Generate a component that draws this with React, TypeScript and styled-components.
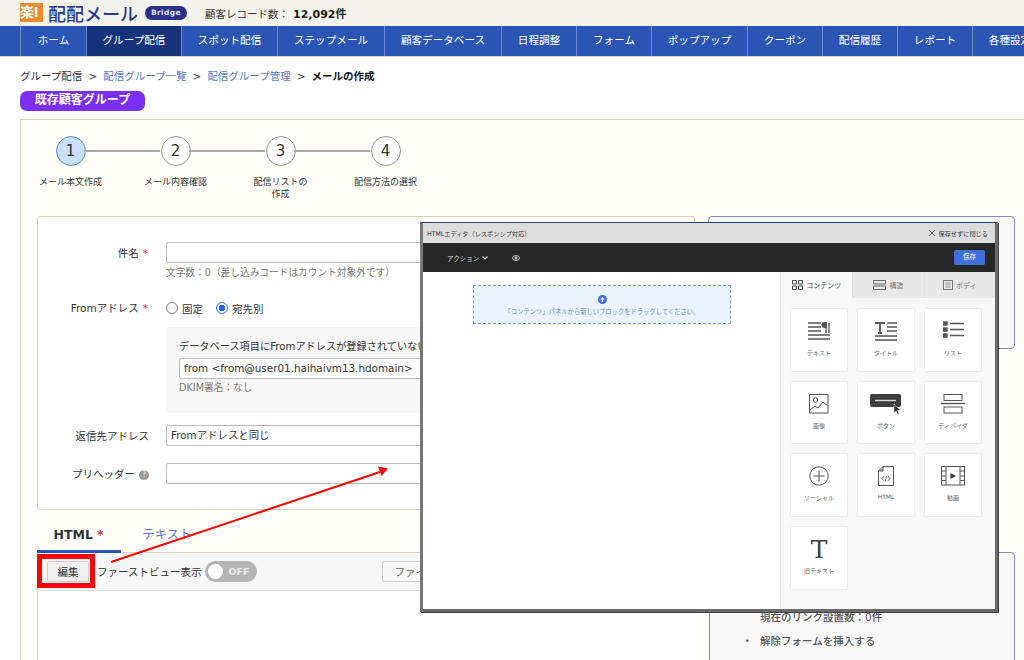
import React from 'react';
import styled, { createGlobalStyle } from 'styled-components';

const GlobalStyle = createGlobalStyle`
  html, body {
    margin: 0;
    padding: 0;
    width: 1024px;
    height: 660px;
    overflow: hidden;
    background: #fff;
    font-family: "DejaVu Sans", "Noto Sans CJK JP", sans-serif;
    color: #333;
  }
  * { box-sizing: border-box; }
`;

const Page = styled.div`
  position: relative;
  width: 1024px;
  height: 660px;
  overflow: hidden;
`;

const Header = styled.header`
  height: 26px;
  background: #f3f2ed;
  padding-left: 20px;
  display: flex;
  align-items: center;
`;

const LogoMark = styled.span`
  width: 23px;
  height: 19px;
  margin-top: -1px;
  background: #ef8b2c;
  color: #fff;
  font-size: 14px;
  font-weight: 700;
  line-height: 19px;
  letter-spacing: -1px;
  white-space: nowrap;
`;

const LogoText = styled.span`
  margin-left: 5px;
  font-size: 18px;
  line-height: 20px;
  font-weight: 500;
  color: #2b3a8c;
  font-family: "Noto Sans CJK JP", sans-serif;
  white-space: nowrap;
`;

const BridgeBadge = styled.span`
  margin-left: 7px;
  width: 42px;
  height: 14px;
  border-radius: 7px;
  background: #2b3088;
  color: #dfe2f5;
  font-size: 7.5px;
  font-weight: 700;
  letter-spacing: 0.4px;
  line-height: 14px;
  text-align: center;
`;

const RecordCount = styled.span`
  margin-left: 18px;
  font-size: 10.5px;
  white-space: nowrap;
  color: #333;
  b { margin-left: 4px; font-weight: 700; color: #222; font-size: 11px; }
`;

const Nav = styled.nav`
  height: 31px;
  background: #2a55b5;
  border-bottom: 1px solid #d9d7c9;
  padding-left: 20px;
  display: flex;
  overflow: hidden;
`;

const NavItem = styled.div<{ $w: number; $active?: boolean }>`
  flex: 0 0 ${(p) => p.$w}px;
  height: 30px;
  line-height: 29px;
  border-left: 1px solid #6f8bc9;
  background: ${(p) => (p.$active ? '#14337a' : 'transparent')};
  color: #fff;
  font-size: 10.6px;
  text-align: center;
  white-space: nowrap;
`;

const Breadcrumb = styled.div`
  margin: 11px 0 0 20px;
  height: 16px;
  line-height: 16px;
  font-size: 10.5px;
  color: #333;
  white-space: nowrap;
  display: flex;
  gap: 6px;
`;

const Crumb = styled.span<{ $link?: boolean; $current?: boolean }>`
  color: ${(p) => (p.$link ? '#5a77c0' : p.$current ? '#111' : '#333')};
  font-weight: ${(p) => (p.$current ? 700 : 400)};
`;

const GroupPill = styled.div`
  margin: 7px 0 0 20px;
  width: 125px;
  height: 20px;
  border-radius: 7px;
  background: #7a2ff2;
  color: #fff;
  font-size: 12px;
  font-weight: 700;
  line-height: 19px;
  text-align: center;
`;

const MainCard = styled.section`
  margin: 8px 0 0 20px;
  height: 560px;
  padding: 0 0 0 16px;
  background: #fffdf8;
  border: 1px solid #d8d2b8;
  border-right: none;
`;

const Steps = styled.ol`
  list-style: none;
  margin: 0 0 0 -19px;
  padding: 16px 0 0 0;
  height: 96px;
  display: flex;
`;

const Step = styled.li`
  position: relative;
  width: 105px;
  display: flex;
  flex-direction: column;
  align-items: center;
  &:not(:last-child)::after {
    content: '';
    position: absolute;
    top: 14px;
    left: 66px;
    width: 76px;
    height: 2px;
    background: #aaa;
  }
`;

const StepCircle = styled.span<{ $active?: boolean }>`
  width: 30px;
  height: 30px;
  border-radius: 50%;
  border: 1px solid ${(p) => (p.$active ? '#5b8fd6' : '#999')};
  background: ${(p) => (p.$active ? '#c9dff7' : '#fff')};
  font-size: 15px;
  line-height: 28px;
  text-align: center;
  color: #333;
`;

const StepLabel = styled.span`
  margin-top: 10px;
  width: 90px;
  font-size: 9px;
  line-height: 12px;
  text-align: center;
  color: #333;
`;

const Columns = styled.div`
  display: flex;
  gap: 13px;
`;

const FormColumn = styled.div`
  width: 658px;
  flex: none;
`;

const FormCard = styled.div`
  height: 294px;
  background: #fff;
  border: 1px solid #d8d2b8;
  border-radius: 3px;
  padding-top: 25px;
`;

const FieldRow = styled.div<{ $mt?: number }>`
  display: flex;
  margin-top: ${(p) => p.$mt ?? 0}px;
`;

const FieldLabel = styled.label`
  width: 120px;
  flex: none;
  padding: 3px 9px 0 0;
  text-align: right;
  font-size: 10.5px;
  line-height: 16px;
  color: #333;
  white-space: nowrap;
`;

const Required = styled.span`
  margin: 0 1px 0 4px;
  color: #d33;
`;

const FieldBody = styled.div`
  margin-left: 8px;
  flex: 1;
  min-width: 0;
`;

const TextInput = styled.div`
  width: 100%;
  height: 21px;
  padding-left: 4px;
  background: #fff;
  border: 1px solid #bbb;
  border-radius: 2px;
  font-size: 10.4px;
  line-height: 19px;
  color: #333;
  white-space: nowrap;
  overflow: hidden;
`;

const Hint = styled.div<{ $mt?: number }>`
  margin-top: ${(p) => p.$mt ?? 3}px;
  font-size: 9.7px;
  line-height: 14px;
  color: #777;
  white-space: nowrap;
`;

const RadioGroup = styled.div`
  height: 22px;
  display: flex;
  align-items: center;
  font-size: 10.5px;
  color: #333;
`;

const Radio = styled.span<{ $on?: boolean }>`
  width: 12px;
  height: 12px;
  margin-right: 4px;
  border-radius: 50%;
  border: ${(p) => (p.$on ? '1px solid #2f6fe0' : '1px solid #777')};
  background: ${(p) => (p.$on ? 'radial-gradient(circle, #1f66e5 0 3px, #fff 3.5px)' : '#fff')};
`;

const RadioText = styled.span`
  margin-right: 13px;
`;

const FallbackBox = styled.div`
  margin-top: 8px;
  height: 86px;
  padding: 12px 13px;
  background: #f7f7f7;
  white-space: nowrap;
  overflow: hidden;
`;

const FallbackTitle = styled.div`
  font-size: 10.2px;
  line-height: 16px;
  margin-bottom: 3px;
`;

const HelpMark = styled.span`
  display: inline-block;
  width: 10px;
  height: 10px;
  margin-left: 4px;
  border-radius: 50%;
  background: #999;
  color: #fff;
  font-size: 8px;
  line-height: 10px;
  text-align: center;
  vertical-align: 1px;
`;

const Tabs = styled.div`
  margin-top: 15px;
  height: 28px;
  display: flex;
  gap: 4px;
  border-bottom: 1px solid #dcd7c4;
`;

const Tab = styled.div<{ $active?: boolean }>`
  width: 84px;
  height: 28px;
  text-align: center;
  font-size: 12.5px;
  line-height: 20px;
  font-weight: ${(p) => (p.$active ? 700 : 400)};
  color: ${(p) => (p.$active ? '#333' : '#5a77c8')};
  border-bottom: ${(p) => (p.$active ? '3px solid #2a55b5' : 'none')};
  white-space: nowrap;
`;

const EditorToolbar = styled.div`
  height: 38px;
  padding-left: 9px;
  background: #f7f7f7;
  border-bottom: 1px solid #ddd;
  border-left: 1px solid #d8d2b8;
  display: flex;
  align-items: center;
  font-size: 10.5px;
  color: #333;
`;

const ToolButton = styled.button`
  width: 42px;
  height: 21px;
  padding: 0;
  background: #f1f1f1;
  border: 1px solid #ccc;
  border-radius: 2px;
  font: inherit;
  color: #333;
`;

const ToolText = styled.span`
  margin-left: 8px;
`;

const FileButton = styled(ToolButton)`
  width: 80px;
  margin-left: 125px;
  text-align: left;
  padding-left: 11px;
  color: #666;
  background: #f7f7f7;
`;

const Toggle = styled.span`
  position: relative;
  margin-left: 4px;
  width: 52px;
  height: 21px;
  border-radius: 11px;
  background: #b5b5b5;
  color: #e9e9e9;
  font-size: 9.5px;
  font-weight: 700;
  line-height: 21px;
  padding-left: 23px;
  &::before {
    content: '';
    position: absolute;
    left: 3px;
    top: 3px;
    width: 15px;
    height: 15px;
    border-radius: 50%;
    background: #fff;
  }
`;

const EditorBody = styled.div`
  height: 70px;
  background: #fff;
  border-left: 1px solid #d8d2b8;
`;

const SideColumn = styled.aside`
  width: 307px;
  flex: none;
`;

const SidePanel = styled.div<{ $h: number; $mt?: number; $ml?: number }>`
  height: ${(p) => p.$h}px;
  margin-top: ${(p) => p.$mt ?? 0}px;
  margin-left: ${(p) => p.$ml ?? 0}px;
  background: #f8f8f8;
  border: 1px solid #8088c8;
  border-radius: 4px;
  overflow: hidden;
`;

const SideList = styled.ul`
  margin: 55px 0 0 0;
  padding: 0 0 0 50px;
  list-style: none;
  font-size: 10.5px;
  line-height: 18px;
  color: #555;
  font-weight: 500;
`;

const SideItem = styled.li<{ $dot?: boolean }>`
  margin-top: ${(p) => (p.$dot ? 6 : 0)}px;
  position: relative;
  white-space: nowrap;
  &::before {
    content: '${(p) => (p.$dot ? '・' : '')}';
    position: absolute;
    left: -18px;
  }
`;

/* overlay: screenshot of the editor window pasted over the page */
const EditorWindow = styled.div`
  position: absolute;
  left: 420px;
  top: 222px;
  width: 578px;
  height: 390px;
  display: flex;
  flex-direction: column;
  background: #fff;
  border: 3px solid #6a6a6a;
  border-top: 1px solid #28406e;
  border-left-color: #777;
  box-shadow: 1px 1px 0 #444;
`;

const WindowTitle = styled.div`
  height: 20px;
  padding: 0 7px 0 4px;
  background: #dcdcdc;
  display: flex;
  align-items: center;
  justify-content: space-between;
  font-size: 6.2px;
  color: #333;
  white-space: nowrap;
`;

const CloseLink = styled.span`
  display: flex;
  align-items: center;
  gap: 3px;
`;

const ActionBar = styled.div`
  height: 29px;
  flex: none;
  padding: 0 10px 0 24px;
  background: #262626;
  color: #ddd;
  font-size: 6.5px;
  display: flex;
  align-items: center;
`;

const ActionMenu = styled.span`
  display: flex;
  align-items: center;
  gap: 3px;
`;

const EyeIcon = styled.span`
  margin-left: 24px;
  display: flex;
`;

const SaveButton = styled.span`
  margin-left: auto;
  width: 31px;
  height: 15px;
  border-radius: 2px;
  background: #3f6fd8;
  color: #fff;
  line-height: 15px;
  text-align: center;
`;

const EditorPane = styled.div`
  flex: 1;
  min-height: 0;
  display: flex;
`;

const Canvas = styled.div`
  flex: 1;
  padding: 13px 49px 0 50px;
  background: #fff;
`;

const DropZone = styled.div`
  height: 39px;
  background: #e8f3fe;
  border: 1px dashed #7a9be0;
  display: flex;
  flex-direction: column;
  align-items: center;
  padding-top: 9px;
  gap: 3px;
  font-size: 6.3px;
  color: #6c8bd0;
  white-space: nowrap;
`;

const BlockPanel = styled.div`
  width: 215px;
  flex: none;
  background: #f8f8f8;
  border-left: 1px solid #eee;
`;

const PanelTabs = styled.div`
  height: 26px;
  display: flex;
`;

const PanelTab = styled.div<{ $active?: boolean }>`
  width: 71.67px;
  background: ${(p) => (p.$active ? '#f8f8f8' : '#e8e8e8')};
  color: ${(p) => (p.$active ? '#444' : '#777')};
  border-left: ${(p) => (p.$active ? 'none' : '1px solid #e0e0e0')};
  font-size: 7px;
  display: flex;
  align-items: center;
  justify-content: center;
  gap: 3px;
  white-space: nowrap;
`;

const BlockGrid = styled.div`
  padding: 10px 12px 0 9px;
  display: grid;
  grid-template-columns: repeat(3, 58px);
  grid-auto-rows: 63.7px;
  column-gap: 9px;
  row-gap: 9px;
`;

const BlockTile = styled.div`
  background: #fff;
  border: 1px solid #eee;
  border-radius: 2px;
  display: flex;
  flex-direction: column;
  align-items: center;
  padding-top: 12px;
  font-size: 6px;
  color: #666;
  white-space: nowrap;
`;

const BlockIcon = styled.span`
  height: 21px;
  display: flex;
  align-items: flex-start;
  justify-content: center;
`;

const BlockLabel = styled.span`
  margin-top: 6px;
`;

const SerifT = styled.span`
  font-family: "DejaVu Serif", "Liberation Serif", serif;
  font-size: 25px;
  line-height: 21px;
  color: #444;
`;

const EditHighlight = styled.div`
  position: absolute;
  left: 37px;
  top: 554px;
  width: 58px;
  height: 34px;
  border: 5px solid #f00;
`;

const Annotation = styled.svg`
  position: absolute;
  left: 0;
  top: 0;
`;

const g = '#555';

const icons: Record<string, React.ReactNode> = {
  text: (
    <svg width="24" height="21" viewBox="0 0 24 21" fill="none" stroke={g}>
      <path d="M1 2h13M1 6h13M1 10h13M1 14h22M1 18h22" strokeWidth="1.3" />
      <path d="M19 2v10M22 2v10" strokeWidth="1.3" />
      <path d="M22 1h-4.500a3 3 0 0 0 0 6H20V1z" fill={g} stroke="none" />
    </svg>
  ),
  title: (
    <svg width="24" height="21" viewBox="0 0 24 21" fill="none" stroke={g} strokeWidth="1.3">
      <path d="M1 2h10M6 2v10M4 12h4" strokeWidth="1.8" />
      <path d="M13 2h10M13 6h10M13 10h10M1 15h22M1 19h22" />
    </svg>
  ),
  list: (
    <svg width="21" height="17" viewBox="0 0 21 17" fill="none" stroke={g} strokeWidth="1.4">
      <path d="M0 1h4v3H0zM0 7h4v3H0zM0 13h4v3H0z" fill={g} />
      <path d="M7 2.500h14M7 8.500h14M7 14.500h14" />
    </svg>
  ),
  image: (
    <svg width="20" height="20" viewBox="0 0 20 20" fill="none" stroke={g}>
      <rect x=".5" y=".5" width="18.5" height="18.5" strokeWidth="1" />
      <circle cx="6.5" cy="6" r="2.2" />
      <path d="M1 16l5-4 3 2 5-6 5 4" />
    </svg>
  ),
  button: (
    <svg width="33" height="21" viewBox="0 0 33 21" fill="none">
      <rect x="0" y="0" width="31" height="13" rx="2" fill="#3e3e3e" />
      <path d="M5 6.500h21" stroke="#ddd" strokeWidth="1.4" />
      <path d="M24 10l0 9 2.200-2 1.500 3.500 1.500-.7-1.500-3.300 3-.2z" fill="#333" stroke="#fff" strokeWidth=".5" />
    </svg>
  ),
  divider: (
    <svg width="24" height="20" viewBox="0 0 24 20" fill="none" stroke={g}>
      <rect x="3" y=".5" width="18" height="6" />
      <path d="M0 9.500h24" strokeWidth="1.4" />
      <rect x="3" y="13" width="18" height="6" />
    </svg>
  ),
  social: (
    <svg width="20" height="20" viewBox="0 0 20 20" fill="none" stroke={g}>
      <circle cx="10" cy="10" r="9.2" />
      <path d="M10 4.500v11M4.500 10h11" />
    </svg>
  ),
  html: (
    <svg width="16" height="20" viewBox="0 0 16 20" fill="none" stroke={g}>
      <path d="M5 .5h10.500v19H.5V5z" />
      <path d="M5 .5V5H.5" fill="#aaa" />
      <path d="M6 10l-2 2.500L6 15M10 10l2 2.500-2 2.500M8.800 9.500l-1.600 6" strokeWidth=".8" />
    </svg>
  ),
  video: (
    <svg width="24" height="20" viewBox="0 0 24 20" fill="none" stroke={g}>
      <rect x=".5" y=".5" width="23" height="18.5" />
      <path d="M5 .5v18.500M19 .5v18.500M.5 5h4.500M.5 10h4.500M.5 14.500h4.500M19 5h4.500M19 10h4.500M19 14.500h4.500" />
      <path d="M9.500 7l5.500 3-5.500 3z" fill="#333" stroke="none" />
    </svg>
  ),
};

const navItems = [
  { label: 'ホーム', w: 66 },
  { label: 'グループ配信', w: 95, active: true },
  { label: 'スポット配信', w: 96 },
  { label: 'ステップメール', w: 107 },
  { label: '顧客データベース', w: 117 },
  { label: '日程調整', w: 75 },
  { label: 'フォーム', w: 75 },
  { label: 'ポップアップ', w: 96 },
  { label: 'クーポン', w: 75 },
  { label: '配信履歴', w: 75 },
  { label: 'レポート', w: 75 },
  { label: '各種設定', w: 75 },
];

const steps = [
  { n: 1, label: 'メール本文作成', active: true },
  { n: 2, label: 'メール内容確認' },
  { n: 3, label: '配信リストの\n作成' },
  { n: 4, label: '配信方法の選択' },
];

const blocks = [
  { key: 'text', label: 'テキスト' },
  { key: 'title', label: 'タイトル' },
  { key: 'list', label: 'リスト' },
  { key: 'image', label: '画像' },
  { key: 'button', label: 'ボタン' },
  { key: 'divider', label: 'ディバイダ' },
  { key: 'social', label: 'ソーシャル' },
  { key: 'html', label: 'HTML' },
  { key: 'video', label: '動画' },
];

const App = () => {
  return (
    <Page>
      <GlobalStyle />
      <Header>
        <LogoMark>楽!</LogoMark>
        <LogoText>配配メール</LogoText>
        <BridgeBadge>Bridge</BridgeBadge>
        <RecordCount>
          顧客レコード数：<b>12,092件</b>
        </RecordCount>
      </Header>
      <Nav>
        {navItems.map((item) => (
          <NavItem key={item.label} $w={item.w} $active={item.active}>
            {item.label}
          </NavItem>
        ))}
      </Nav>
      <Breadcrumb>
        <Crumb>グループ配信</Crumb>
        <span>&gt;</span>
        <Crumb $link>配信グループ一覧</Crumb>
        <span>&gt;</span>
        <Crumb $link>配信グループ管理</Crumb>
        <span>&gt;</span>
        <Crumb $current>メールの作成</Crumb>
      </Breadcrumb>
      <GroupPill>既存顧客グループ</GroupPill>
      <MainCard>
        <Steps>
          {steps.map((s) => (
            <Step key={s.n}>
              <StepCircle $active={s.active}>{s.n}</StepCircle>
              <StepLabel>
                {s.label.split('\n').map((line) => (
                  <div key={line}>{line}</div>
                ))}
              </StepLabel>
            </Step>
          ))}
        </Steps>
        <Columns>
          <FormColumn>
            <FormCard>
              <FieldRow>
                <FieldLabel>
                  件名<Required>*</Required>
                </FieldLabel>
                <FieldBody>
                  <TextInput />
                  <Hint>文字数：0（差し込みコードはカウント対象外です）</Hint>
                </FieldBody>
              </FieldRow>
              <FieldRow $mt={17}>
                <FieldLabel>
                  Fromアドレス<Required>*</Required>
                </FieldLabel>
                <FieldBody>
                  <RadioGroup>
                    <Radio />
                    <RadioText>固定</RadioText>
                    <Radio $on />
                    <RadioText>宛先別</RadioText>
                  </RadioGroup>
                  <FallbackBox>
                    <FallbackTitle>データベース項目にFromアドレスが登録されていない場合</FallbackTitle>
                    <TextInput>from &lt;from@user01.haihaivm13.hdomain&gt;</TextInput>
                    <Hint $mt={2}>DKIM署名：なし</Hint>
                  </FallbackBox>
                </FieldBody>
              </FieldRow>
              <FieldRow $mt={12}>
                <FieldLabel>返信先アドレス</FieldLabel>
                <FieldBody>
                  <TextInput>Fromアドレスと同じ</TextInput>
                </FieldBody>
              </FieldRow>
              <FieldRow $mt={17}>
                <FieldLabel>
                  プリヘッダー<HelpMark>?</HelpMark>
                </FieldLabel>
                <FieldBody>
                  <TextInput />
                </FieldBody>
              </FieldRow>
            </FormCard>
            <Tabs>
              <Tab $active>
                HTML<Required>*</Required>
              </Tab>
              <Tab>テキスト</Tab>
            </Tabs>
            <EditorToolbar>
              <ToolButton>編集</ToolButton>
              <ToolText>ファーストビュー表示</ToolText>
              <Toggle>OFF</Toggle>
              <FileButton>ファイルから</FileButton>
            </EditorToolbar>
            <EditorBody />
          </FormColumn>
          <SideColumn>
            <SidePanel $h={133} />
            <SidePanel $h={140} $mt={203} $ml={1}>
              <SideList>
                <SideItem>現在のリンク設置数：0件</SideItem>
                <SideItem $dot>解除フォームを挿入する</SideItem>
              </SideList>
            </SidePanel>
          </SideColumn>
        </Columns>
      </MainCard>

      <EditorWindow>
        <WindowTitle>
          <span>HTMLエディタ（レスポンシブ対応）</span>
          <CloseLink>
            <svg width="8" height="8" viewBox="0 0 8 8" stroke="#444" strokeWidth="0.9">
              <path d="M1 1l6 6M7 1L1 7" />
            </svg>
            保存せずに閉じる
          </CloseLink>
        </WindowTitle>
        <ActionBar>
          <ActionMenu>
            アクション
            <svg width="6" height="4" viewBox="0 0 6 4" fill="none" stroke="#ddd" strokeWidth="1.1">
              <path d="M.5.5L3 3 5.500.5" />
            </svg>
          </ActionMenu>
          <EyeIcon>
            <svg width="8" height="6" viewBox="0 0 8 6" fill="none" stroke="#ddd" strokeWidth=".9">
              <ellipse cx="4" cy="3" rx="3.500" ry="2.400" />
              <circle cx="4" cy="3" r="1" fill="#ddd" />
            </svg>
          </EyeIcon>
          <SaveButton>保存</SaveButton>
        </ActionBar>
        <EditorPane>
          <Canvas>
            <DropZone>
              <svg width="9" height="9" viewBox="0 0 9 9">
                <circle cx="4.500" cy="4.500" r="4.500" fill="#3f6fd8" />
                <path d="M4.500 2L6.500 4.500H5.200V7H3.800V4.500H2.500z" fill="#fff" />
              </svg>
              「コンテンツ」パネルから新しいブロックをドラッグしてください。
            </DropZone>
          </Canvas>
          <BlockPanel>
            <PanelTabs>
              <PanelTab $active>
                <svg width="11" height="10" viewBox="0 0 11 10" fill="none" stroke="#444">
                  <path d="M.5.500h4v3.500h-4zM6.500.500h4v3.500h-4zM.5 6h4v3.500h-4zM6.500 6h4v3.500h-4z" />
                </svg>
                コンテンツ
              </PanelTab>
              <PanelTab>
                <svg width="13" height="10" viewBox="0 0 13 10" fill="none" stroke="#666">
                  <path d="M.5.500h12v3.500H.5zM.5 6h12v3.500H.5z" />
                </svg>
                構造
              </PanelTab>
              <PanelTab>
                <svg width="10" height="10" viewBox="0 0 10 10" fill="none" stroke="#777">
                  <rect x=".5" y=".5" width="9" height="9" />
                  <path d="M2.500 3h5M2.500 5h5M2.500 7h5" strokeWidth=".7" />
                </svg>
                ボディ
              </PanelTab>
            </PanelTabs>
            <BlockGrid>
              {blocks.map((b) => (
                <BlockTile key={b.key}>
                  <BlockIcon>{icons[b.key]}</BlockIcon>
                  <BlockLabel>{b.label}</BlockLabel>
                </BlockTile>
              ))}
              <BlockTile>
                <BlockIcon>
                  <SerifT>T</SerifT>
                </BlockIcon>
                <BlockLabel>旧テキスト</BlockLabel>
              </BlockTile>
            </BlockGrid>
          </BlockPanel>
        </EditorPane>
      </EditorWindow>

      <EditHighlight />
      <Annotation width="1024" height="660" viewBox="0 0 1024 660">
        <path d="M111 562L380 472" stroke="#f00" strokeWidth="2" fill="none" />
        <path d="M388 468.500L378 466.500L381.500 476z" fill="#f00" />
      </Annotation>
    </Page>
  );
};

export default App;
